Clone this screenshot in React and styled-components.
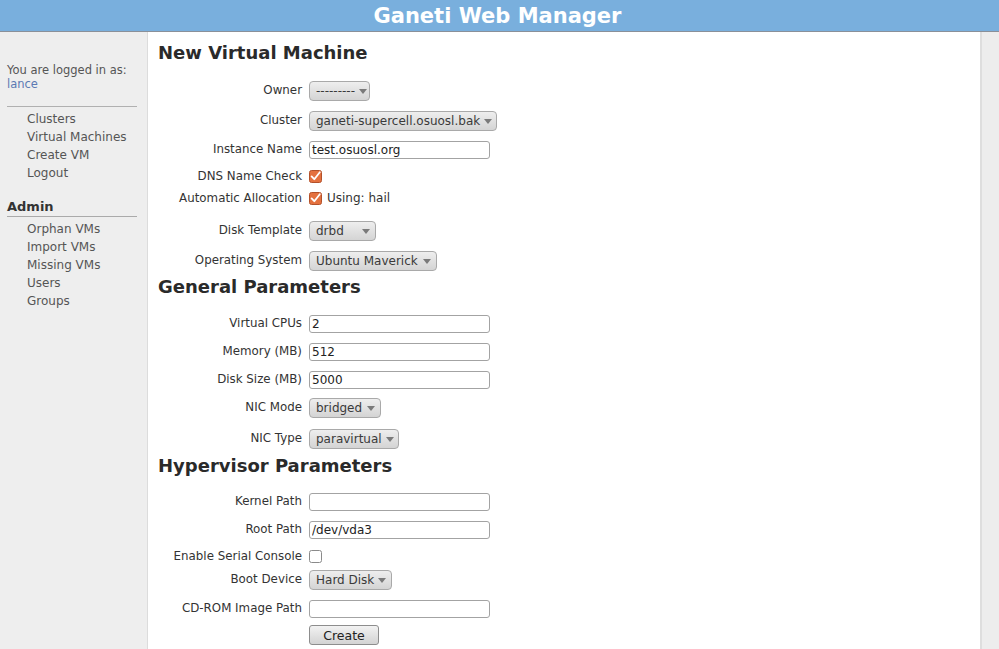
import React from "react";
import styled, { createGlobalStyle } from "styled-components";

const GlobalStyle = createGlobalStyle`
	html, body {
		margin: 0;
		padding: 0;
		background: #fff;
		font-family: "DejaVu Sans", "Liberation Sans", sans-serif;
	}
`;

const Page = styled.div`
	display: flex;
	flex-direction: column;
	min-height: 100vh;
`;

const Header = styled.header`
	height: 31px;
	background: #79afdd;
	border-bottom: 1px solid #8a9099;
	display: flex;
	align-items: center;
	justify-content: center;
	color: #fff;
	font-weight: bold;
	font-size: 21px;
	padding-right: 4px;
`;

const Body = styled.div`
	flex: 1;
	display: flex;
`;

const Sidebar = styled.aside`
	width: 148px;
	background: #eeeeee;
	border-right: 1px solid #dcdcdc;
	padding-top: 31px;
	box-sizing: border-box;
	flex-shrink: 0;
`;

const LoggedIn = styled.div`
	padding: 0 7px;
	font-size: 11.5px;
	line-height: 14px;
	color: #555;
`;

const UserLink = styled.a`
	display: block;
	color: #5b79b3;
	text-decoration: none;
`;

const Divider = styled.div`
	margin: 15px 10px 3px 7px;
	border-top: 1px solid #b0b0b0;
`;

const NavList = styled.ul`
	list-style: none;
	margin: 0;
	padding: 0 0 0 27px;
`;

const NavItem = styled.li`
	font-size: 12px;
	line-height: 18px;
	color: #555;
`;

const SectionTitle = styled.div`
	margin: 17px 10px 3px 7px;
	font-size: 13px;
	font-weight: bold;
	line-height: 16px;
	color: #333;
	border-bottom: 1px solid #aaa;
	padding-bottom: 1px;
`;

const Main = styled.main`
	flex: 1;
	padding: 10px 0 0 10px;
	color: #333;
`;

const RightStrip = styled.div`
	width: 17px;
	background: #ededed;
	border-left: 2px solid #dedede;
	flex-shrink: 0;
`;

const Heading = styled.h2`
	margin: ${(p) => p.$mt || 0}px 0 0 0;
	font-size: 18px;
	line-height: 22px;
	font-weight: bold;
	color: #2a2a2a;
`;

const Row = styled.div`
	display: grid;
	grid-template-columns: 144px auto;
	column-gap: 7px;
	align-items: center;
	justify-items: start;
	margin-top: ${(p) => p.$mt || 0}px;
	min-height: ${(p) => p.$h || 0}px;
`;

const Label = styled.label`
	justify-self: end;
	padding-bottom: 2px;
	font-size: 11.85px;
	line-height: 14px;
	color: #333;
	white-space: nowrap;
`;

const SelectBox = styled.div`
	display: inline-flex;
	align-items: center;
	justify-content: space-between;
	box-sizing: border-box;
	width: ${(p) => p.$w}px;
	height: 20px;
	padding: 0 5px 0 6px;
	border: 1px solid #a9a9a9;
	border-radius: 4px;
	background: linear-gradient(#eeeeee, #d4d4d4);
	font-size: 12px;
	color: #3a3a3a;
	white-space: nowrap;
`;

const Arrow = styled.span`
	width: 0;
	height: 0;
	border-left: 4px solid transparent;
	border-right: 4px solid transparent;
	border-top: 5px solid #7a7a7a;
	margin-left: 4px;
`;

const TextInput = styled.input`
	box-sizing: border-box;
	width: 181px;
	height: 18px;
	padding: 0 2px;
	border: 1px solid #a3a3a3;
	border-radius: 3px;
	font-family: "DejaVu Sans", "Liberation Sans", sans-serif;
	font-size: 12px;
	color: #222;
	outline: none;
`;

const CheckWrap = styled.span`
	display: inline-flex;
	align-items: center;
	gap: 5px;
	padding-bottom: 2px;
	font-size: 12px;
	color: #333;
`;

const Box = styled.span`
	display: inline-block;
	width: 13px;
	height: 13px;
	line-height: 0;
`;

const Button = styled.button`
	width: 70px;
	height: 20px;
	padding: 0;
	border: 1px solid #8d8d8d;
	border-radius: 3px;
	background: linear-gradient(#f2f2f2, #d3d3d3);
	font-family: "DejaVu Sans", "Liberation Sans", sans-serif;
	font-size: 12.5px;
	color: #222;
`;

const Checkbox = ({ checked }) => (
	<Box>
		<svg width="13" height="13" viewBox="0 0 13 13">
			{checked ? (
				<>
					<rect x="0.5" y="0.5" width="12" height="12" rx="2" fill="#e4713f" stroke="#b3512a" />
					<path d="M2.6 6.4 L5.3 9.2 L10.8 2.2" fill="none" stroke="#fff" strokeWidth="1.8" strokeLinecap="round" strokeLinejoin="round" />
				</>
			) : (
				<rect x="0.5" y="0.5" width="12" height="12" rx="2" fill="#fff" stroke="#8a8a8a" />
			)}
		</svg>
	</Box>
);

const Select = ({ value, w }) => (
	<SelectBox $w={w}>
		<span>{value}</span>
		<Arrow />
	</SelectBox>
);

const App = () => {
	return (
		<Page>
			<GlobalStyle />
			<Header>Ganeti Web Manager</Header>
			<Body>
				<Sidebar>
					<LoggedIn>
						You are logged in as:
						<UserLink href="#">lance</UserLink>
					</LoggedIn>
					<Divider />
					<NavList>
						<NavItem>Clusters</NavItem>
						<NavItem>Virtual Machines</NavItem>
						<NavItem>Create VM</NavItem>
						<NavItem>Logout</NavItem>
					</NavList>
					<SectionTitle>Admin</SectionTitle>
					<NavList>
						<NavItem>Orphan VMs</NavItem>
						<NavItem>Import VMs</NavItem>
						<NavItem>Missing VMs</NavItem>
						<NavItem>Users</NavItem>
						<NavItem>Groups</NavItem>
					</NavList>
				</Sidebar>
				<Main>
					<Heading>New Virtual Machine</Heading>
					<Row $mt={17}>
						<Label>Owner</Label>
						<Select value="---------" w={61} />
					</Row>
					<Row $mt={10}>
						<Label>Cluster</Label>
						<Select value="ganeti-supercell.osuosl.bak" w={188} />
					</Row>
					<Row $mt={10}>
						<Label>Instance Name</Label>
						<TextInput defaultValue="test.osuosl.org" />
					</Row>
					<Row $mt={7} $h={22}>
						<Label>DNS Name Check</Label>
						<CheckWrap>
							<Checkbox checked />
						</CheckWrap>
					</Row>
					<Row $h={22}>
						<Label>Automatic Allocation</Label>
						<CheckWrap>
							<Checkbox checked />
							Using: hail
						</CheckWrap>
					</Row>
					<Row $mt={11}>
						<Label>Disk Template</Label>
						<Select value="drbd" w={67} />
					</Row>
					<Row $mt={10}>
						<Label>Operating System</Label>
						<Select value="Ubuntu Maverick" w={128} />
					</Row>

					<Heading $mt={5}>General Parameters</Heading>
					<Row $mt={17}>
						<Label>Virtual CPUs</Label>
						<TextInput defaultValue="2" />
					</Row>
					<Row $mt={10}>
						<Label>Memory (MB)</Label>
						<TextInput defaultValue="512" />
					</Row>
					<Row $mt={10}>
						<Label>Disk Size (MB)</Label>
						<TextInput defaultValue="5000" />
					</Row>
					<Row $mt={9}>
						<Label>NIC Mode</Label>
						<Select value="bridged" w={72} />
					</Row>
					<Row $mt={11}>
						<Label>NIC Type</Label>
						<Select value="paravirtual" w={90} />
					</Row>

					<Heading $mt={6}>Hypervisor Parameters</Heading>
					<Row $mt={16}>
						<Label>Kernel Path</Label>
						<TextInput defaultValue="" />
					</Row>
					<Row $mt={10}>
						<Label>Root Path</Label>
						<TextInput defaultValue="/dev/vda3" />
					</Row>
					<Row $mt={7} $h={22}>
						<Label>Enable Serial Console</Label>
						<CheckWrap>
							<Checkbox />
						</CheckWrap>
					</Row>
					<Row $mt={2}>
						<Label>Boot Device</Label>
						<Select value="Hard Disk" w={83} />
					</Row>
					<Row $mt={10}>
						<Label>CD-ROM Image Path</Label>
						<TextInput defaultValue="" />
					</Row>
					<Row $mt={7}>
						<span />
						<Button>Create</Button>
					</Row>
				</Main>
				<RightStrip />
			</Body>
		</Page>
	);
};

export default App;
